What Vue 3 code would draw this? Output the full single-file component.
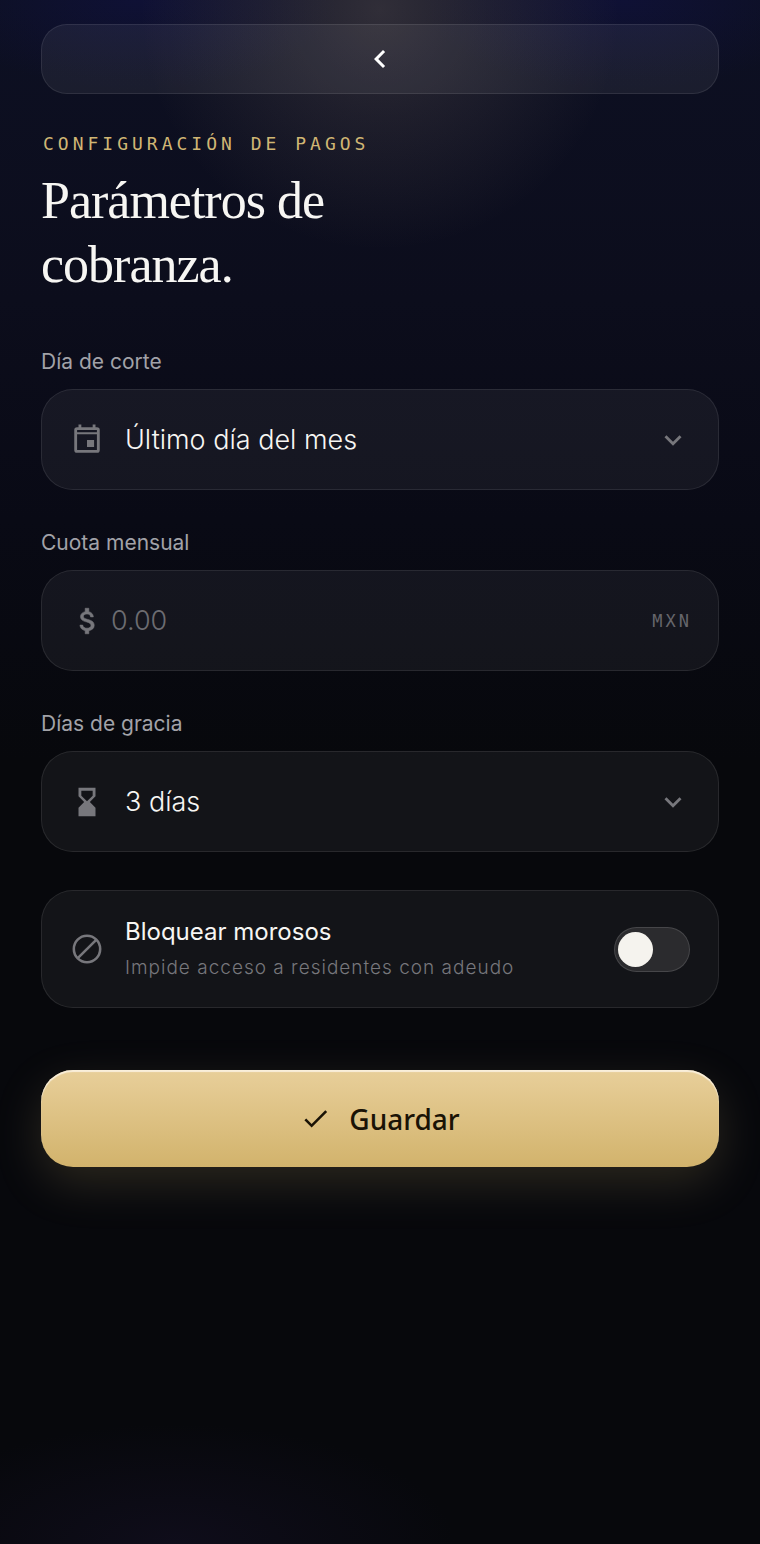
<template>
    <main class="page">
        <button class="back" type="button" aria-label="Volver">
            <svg viewBox="0 0 24 24" width="36" height="36" aria-hidden="true">
                <path d="M15.41 7.41 14 6l-6 6 6 6 1.41-1.41L10.83 12z" fill="currentColor" />
            </svg>
        </button>

        <header class="heading">
            <p class="eyebrow">Configuración de pagos</p>
            <h1>Parámetros de<br />cobranza.</h1>
        </header>

        <form @submit.prevent>
            <div class="group">
                <label class="label" for="cutoff">Día de corte</label>
                <div class="field">
                    <svg class="icon" viewBox="0 0 24 24" aria-hidden="true">
                        <path d="M17 12h-5v5h5zM16 1v2H8V1H6v2H5a2 2 0 0 0-2 2v14a2 2 0 0 0 2 2h14a2 2 0 0 0 2-2V5a2 2 0 0 0-2-2h-1V1zm3 18H5V8h14zM5 6.500V5h14v1.500z" fill="currentColor" />
                    </svg>
                    <select id="cutoff" v-model="cutoff" class="control">
                        <option v-for="day in cutoffDays" :key="day">{{ day }}</option>
                    </select>
                    <svg class="chevron" viewBox="0 0 24 24" aria-hidden="true">
                        <path d="M7.41 8.590 12 13.170l4.590-4.580L18 10l-6 6-6-6z" fill="currentColor" />
                    </svg>
                </div>
            </div>

            <div class="group">
                <label class="label" for="fee">Cuota mensual</label>
                <div class="field money">
                    <svg class="icon" viewBox="0 0 24 24" aria-hidden="true">
                        <path d="M13.300 21h-2.600v-2.200c-2-.4-3.600-1.700-3.700-3.900h2c.1 1.400 1.200 2.200 3 2.200 2 0 2.800-1 2.800-1.900 0-1.200-.7-1.900-3-2.500-2.700-.6-4.400-1.700-4.400-3.800 0-1.900 1.500-3.100 3.300-3.500V3h2.600v2.400c2.100.5 3.100 2 3.200 3.700h-2c-.1-1.300-.9-2.100-2.500-2.100s-2.500.7-2.500 1.800c0 .9.7 1.500 3 2.100s4.600 1.500 4.600 4.200c0 2-1.500 3.300-3.800 3.700z" fill="currentColor" stroke="currentColor" stroke-width=".4" />
                    </svg>
                    <input id="fee" v-model="fee" class="control" type="text" inputmode="decimal" placeholder="0.00" />
                    <span class="currency">MXN</span>
                </div>
            </div>

            <div class="group">
                <label class="label" for="grace">Días de gracia</label>
                <div class="field">
                    <svg class="icon" viewBox="0 0 24 24" aria-hidden="true">
                        <path d="M6 2v6l4 4-4 4v6h12v-6l-4-4 4-4V2zm10 5.500-4 4-4-4V4h8z" fill="currentColor" />
                    </svg>
                    <select id="grace" v-model="grace" class="control">
                        <option v-for="n in [1, 3, 5, 7, 10]" :key="n" :value="n">{{ n }} {{ n === 1 ? 'día' : 'días' }}</option>
                    </select>
                    <svg class="chevron" viewBox="0 0 24 24" aria-hidden="true">
                        <path d="M7.41 8.590 12 13.170l4.590-4.580L18 10l-6 6-6-6z" fill="currentColor" />
                    </svg>
                </div>
            </div>

            <label class="field toggle" for="block">
                <svg class="icon" viewBox="0 0 24 24" fill="none" stroke="currentColor" stroke-width="1.800" aria-hidden="true">
                    <circle cx="12" cy="12" r="9.300" />
                    <path d="M5.500 18.500 18.500 5.500" />
                </svg>
                <span class="toggle-text">
                    <span class="toggle-title">Bloquear morosos</span>
                    <span class="toggle-hint">Impide acceso a residentes con adeudo</span>
                </span>
                <input id="block" v-model="blockDebtors" class="switch" type="checkbox" role="switch" />
            </label>

            <button class="save" type="submit">
                <svg viewBox="0 0 24 24" width="31" height="31" aria-hidden="true">
                    <path d="M9 16.170 4.830 12l-1.420 1.410L9 19 21 7l-1.410-1.410z" fill="currentColor" />
                </svg>
                Guardar
            </button>
        </form>
    </main>
</template>

<script setup>
import { ref } from 'vue'

const cutoffDays = ['Último día del mes', 'Día 1', 'Día 15']

const cutoff = ref('Último día del mes')
const fee = ref('')
const grace = ref(3)
const blockDebtors = ref(false)
</script>

<style>
body {
    background: #07080c;
}
</style>

<style scoped>
.page {
    min-height: 100vh;
    box-sizing: border-box;
    padding: 24px 41px;
    color: #f7f6f3;
    font-family: Inter, "Liberation Sans", sans-serif;
    background:
        radial-gradient(circle 240px at 50% 10px, rgba(190, 165, 140, .2), rgba(190, 165, 140, .1) 45%, transparent),
        radial-gradient(ellipse 200px 90px at 18% 0, rgba(18, 18, 80, .4), transparent),
        radial-gradient(ellipse 200px 90px at 82% 0, rgba(18, 18, 80, .4), transparent),
        radial-gradient(ellipse 280px 120px at 23% 100%, rgba(20, 16, 36, .6), transparent),
        linear-gradient(#0d1023, #0c0d1c 300px, #090a15 520px, #07080c 760px);
}

.back {
    display: flex;
    align-items: center;
    justify-content: center;
    width: 100%;
    height: 70px;
    border: 1px solid rgba(255, 255, 255, .09);
    border-radius: 26px;
    background: rgba(255, 255, 255, .06);
    color: #fff;
    cursor: pointer;
}

.heading {
    margin: 38px 0 50px;
}

.eyebrow {
    margin: 0 0 13px;
    padding-left: 2px;
    font: 18px/24px "DejaVu Sans Mono", monospace;
    letter-spacing: 4px;
    text-transform: uppercase;
    color: #d0b674;
}

h1 {
    margin: 0;
    font: 400 52px/64px "Liberation Serif", serif;
    letter-spacing: -1px;
}

.group {
    margin-bottom: 38px;
}

.label {
    display: block;
    margin-bottom: 13px;
    font-size: 21px;
    line-height: 29px;
    color: #a2a2a8;
}

.field {
    display: flex;
    align-items: center;
    height: 101px;
    box-sizing: border-box;
    padding: 0 28px;
    border: 1px solid rgba(255, 255, 255, .09);
    border-radius: 32px;
    background: rgba(250, 250, 255, .05);
}

.icon {
    flex: none;
    width: 34px;
    height: 34px;
    margin-right: 21px;
    color: #77777c;
}

.chevron {
    flex: none;
    width: 34px;
    height: 34px;
    color: #77777c;
    pointer-events: none;
}

.control {
    flex: 1;
    min-width: 0;
    height: 100%;
    padding: 0;
    border: 0;
    outline: none;
    appearance: none;
    background: transparent;
    color: #f7f6f3;
    font-family: inherit;
    font-size: 27px;
    font-weight: 300;
}

.control option {
    background: #14151c;
}

.control::placeholder {
    color: #6c6c71;
    opacity: 1;
}

.money {
    padding-right: 26px;
}

.money .icon {
    margin-right: 7px;
}

.currency {
    font: 17px/24px "DejaVu Sans Mono", monospace;
    letter-spacing: 3px;
    color: #66666b;
}

.toggle {
    height: 118px;
    cursor: pointer;
}

.toggle-text {
    flex: 1;
    display: flex;
    flex-direction: column;
    gap: 6px;
}

.toggle-title {
    font-size: 24px;
    line-height: 32px;
}

.toggle-hint {
    font-size: 19px;
    line-height: 28px;
    font-weight: 300;
    letter-spacing: 1px;
    color: #77777c;
}

.switch {
    flex: none;
    display: flex;
    align-items: center;
    width: 76px;
    height: 45px;
    margin: 0;
    padding: 0 3px;
    box-sizing: border-box;
    border: 1px solid rgba(255, 255, 255, .13);
    border-radius: 23px;
    appearance: none;
    background: #2b2b2e;
    cursor: pointer;
}

.switch::before {
    content: "";
    width: 35px;
    height: 35px;
    border-radius: 50%;
    background: #f5f3ee;
}

.switch:checked {
    justify-content: flex-end;
    background: #d4b772;
}

.save {
    display: flex;
    align-items: center;
    justify-content: center;
    gap: 18px;
    width: 100%;
    height: 97px;
    margin-top: 62px;
    border: 0;
    border-radius: 32px;
    background: linear-gradient(#e8cf9a, #d2b36c);
    box-shadow:
        inset 0 2px 1px rgba(255, 250, 240, .75),
        0 16px 48px rgba(212, 183, 114, .18);
    color: #1a1306;
    font: 500 28px/36px "Noto Sans", sans-serif;
    cursor: pointer;
}
</style>
